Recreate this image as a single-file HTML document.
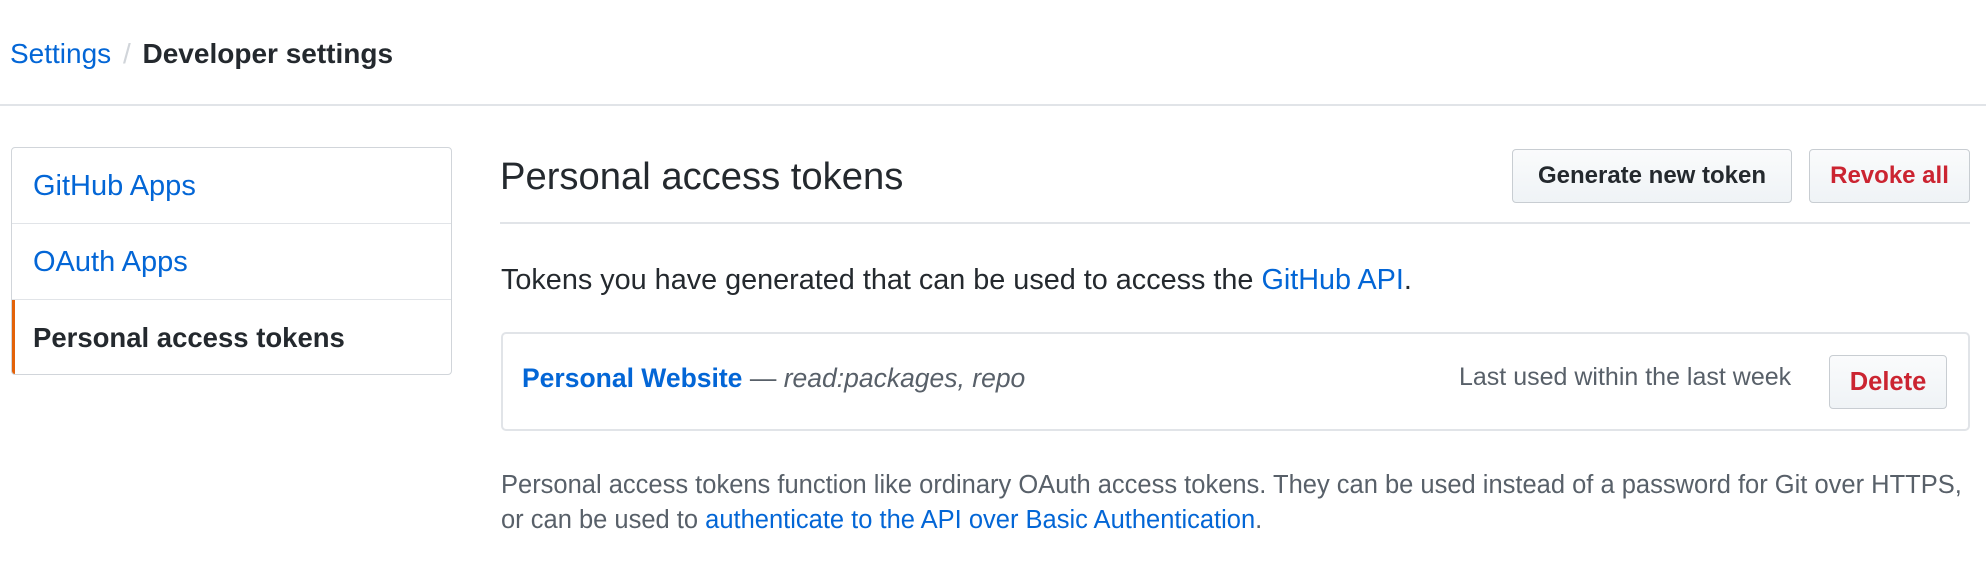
<!DOCTYPE html>
<html><head><meta charset="utf-8"><style>
*{box-sizing:border-box;margin:0;padding:0}
body{width:1986px;height:568px;background:#fff;font-family:"Liberation Sans",sans-serif;color:#24292e;position:relative;overflow:hidden}
.a{position:absolute;white-space:nowrap}
.blue{color:#0366d6}
.btn{position:absolute;border:1px solid #c8cdd2;border-radius:4px;background:linear-gradient(#fafbfc,#eff3f6);font-weight:bold;font-size:24px;display:flex;align-items:center;justify-content:center}
</style></head><body>
<div class="a" style="left:10px;top:34px;font-size:28px;line-height:40px"><span class="blue">Settings</span> <span style="color:#d1d5da;margin:0 4px">/</span> <b>Developer settings</b></div>
<div class="a" style="left:0;top:104px;width:1986px;height:2px;background:#e1e4e8"></div>

<div class="a" style="left:11px;top:147px;width:441px;height:228px;border:1px solid #d1d5da;border-radius:4px;overflow:hidden">
 <div style="height:76px;border-bottom:1px solid #e1e4e8;padding-left:21px;line-height:77px;font-size:29px" class="blue">GitHub Apps</div>
 <div style="height:76px;border-bottom:1px solid #e1e4e8;padding-left:21px;line-height:77px;font-size:29px" class="blue">OAuth Apps</div>
 <div style="height:76px;padding-left:18px;line-height:76px;font-size:27.5px;font-weight:bold;border-left:3px solid #e36209">Personal access tokens</div>
</div>

<div class="a" style="left:500px;top:152px;font-size:38.2px;line-height:50px">Personal access tokens</div>
<div class="btn" style="left:1512px;top:149px;width:280px;height:54px">Generate new token</div>
<div class="btn" style="left:1809px;top:149px;width:161px;height:54px;color:#cb2431">Revoke all</div>
<div class="a" style="left:500px;top:222px;width:1470px;height:2px;background:#e1e4e8"></div>

<div class="a" style="left:501px;top:260px;font-size:28.8px;line-height:40px">Tokens you have generated that can be used to access the <span class="blue">GitHub API</span>.</div>

<div class="a" style="left:501px;top:332px;width:1469px;height:99px;border:2px solid #e1e4e8;border-radius:5px"></div>
<div class="a" style="left:522px;top:358px;font-size:26.5px;line-height:40px"><b class="blue">Personal Website</b> <span style="color:#586069">— <i>read:packages, repo</i></span></div>
<div class="a" style="left:1459px;top:357px;font-size:25px;line-height:40px;color:#586069">Last used within the last week</div>
<div class="btn" style="left:1829px;top:355px;width:118px;height:54px;color:#cb2431;font-size:25.5px">Delete</div>

<div class="a" style="left:501px;top:468px;font-size:25.5px;line-height:35px;color:#586069">Personal access tokens function like ordinary OAuth access tokens. They can be used instead of a password for Git over HTTPS,<br>or can be used to <span class="blue">authenticate to the API over Basic Authentication</span>.</div>
</body></html>
